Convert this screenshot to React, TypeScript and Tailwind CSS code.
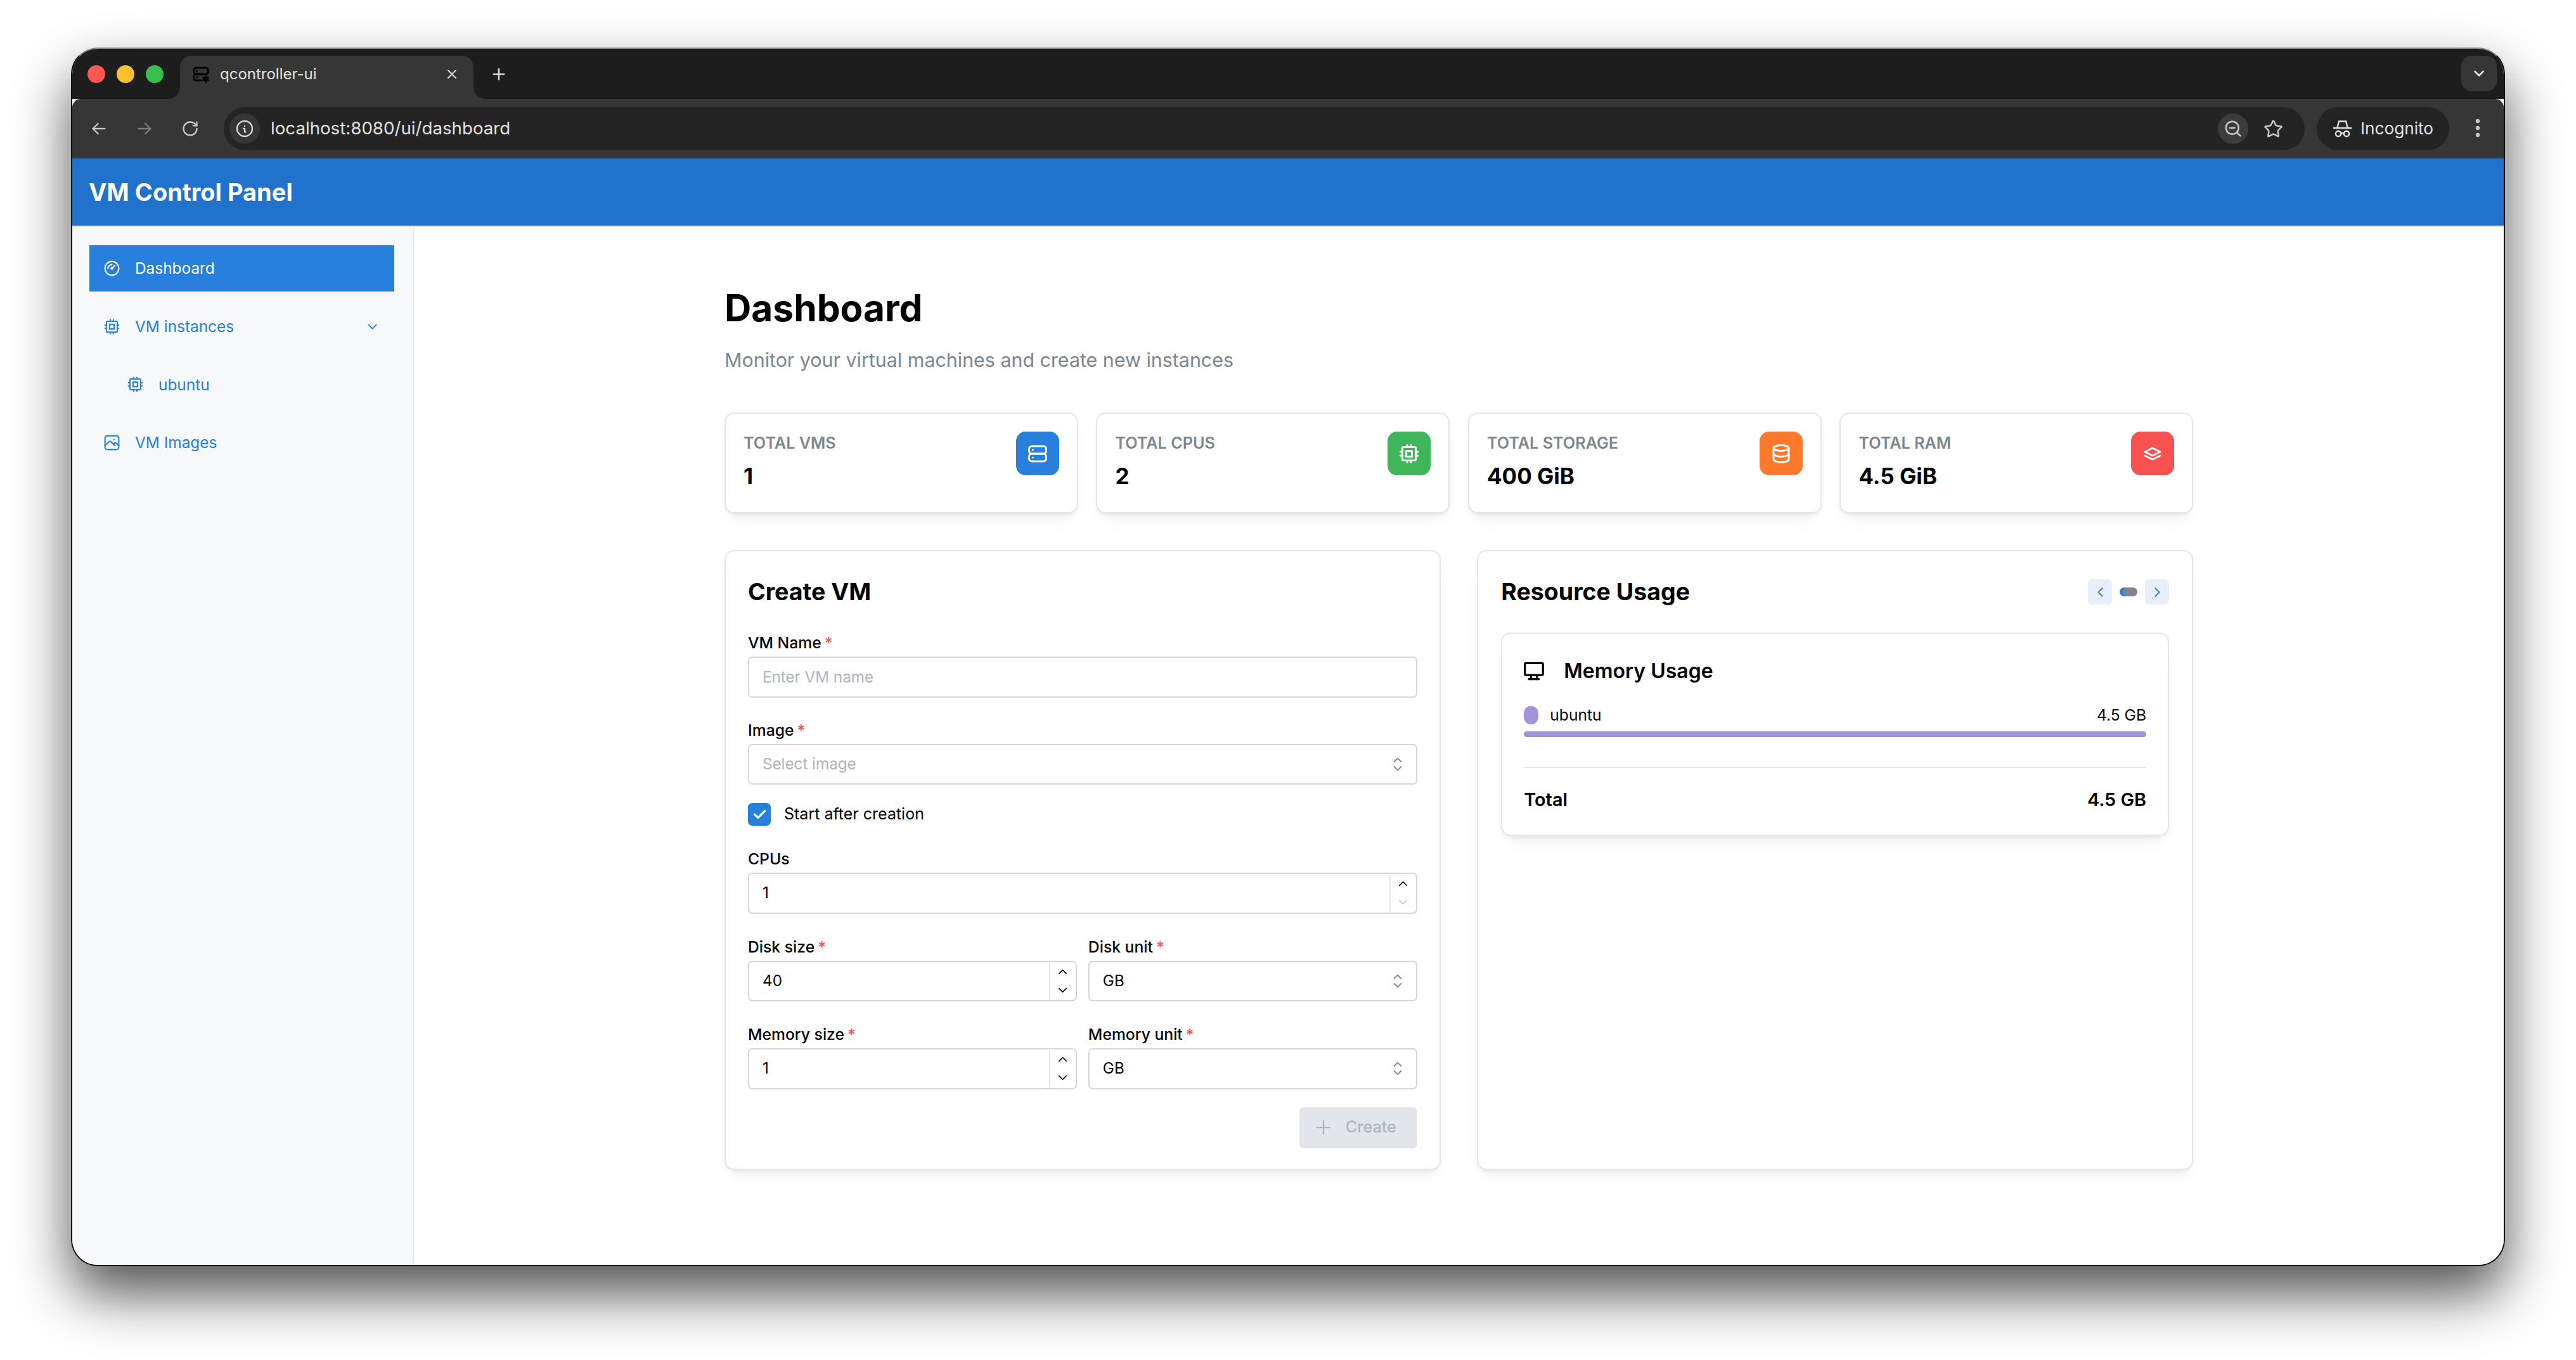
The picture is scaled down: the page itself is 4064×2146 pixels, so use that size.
import type { ReactNode } from 'react'
import { Star, ZoomOut, RotateCw } from 'lucide-react'
import {
  TbArrowLeft,
  TbArrowRight,
  TbCheck,
  TbChevronDown,
  TbChevronLeft,
  TbChevronRight,
  TbChevronUp,
  TbCpu,
  TbDatabase,
  TbDeviceDesktop,
  TbGauge,
  TbInfoCircle,
  TbPhoto,
  TbPlus,
  TbSelector,
  TbServer,
  TbServerCog,
  TbStack,
  TbX,
} from 'react-icons/tb'

const stats = [
  { label: 'Total VMs', value: '1', icon: TbServer, color: 'bg-[#2780dd]' },
  { label: 'Total CPUs', value: '2', icon: TbCpu, color: 'bg-[#40b65a]' },
  { label: 'Total Storage', value: '400 GiB', icon: TbDatabase, color: 'bg-[#fd7a2c]' },
  { label: 'Total RAM', value: '4.5 GiB', icon: TbStack, color: 'bg-[#f95050]' },
]

const cardClass =
  'rounded-[15px] border-2 border-[#e4e6e9] bg-white shadow-[0_2px_5px_rgba(0,0,0,0.05),0_18px_27px_-9px_rgba(0,0,0,0.05),0_13px_13px_-9px_rgba(0,0,0,0.04)]'

function ChromeBar() {
  return (
    <>
      <div className="flex h-[79px] shrink-0 bg-[#1d1d1d] pt-[11px]">
        <div className="flex h-[58px] items-center gap-[18px] pl-[24px] pr-[28px]">
          <span className="h-[28px] w-[28px] rounded-full bg-[#fd5754]" />
          <span className="h-[28px] w-[28px] rounded-full bg-[#fbc02f]" />
          <span className="h-[28px] w-[28px] rounded-full bg-[#36c14e]" />
        </div>
        <div className="relative ml-[-2px] flex h-[68px] w-[463px] items-center rounded-t-[18px] bg-[#363636] pb-[10px] pl-[18px] pr-[22px] text-[#e3e3e3]">
          <span className="absolute bottom-0 left-[-18px] h-[18px] w-[18px] bg-[radial-gradient(circle_at_0_0,transparent_17.5px,#363636_18px)]" />
          <span className="absolute bottom-0 right-[-18px] h-[18px] w-[18px] bg-[radial-gradient(circle_at_100%_0,transparent_17.5px,#363636_18px)]" />
          <TbServerCog size={30} strokeWidth={2.4} className="text-black" />
          <span className="ml-[15px] flex-1 text-[24px]">qcontroller-ui</span>
          <TbX size={24} strokeWidth={2} />
        </div>
        <div className="ml-[26px] flex h-[58px] items-center text-[#d6d6d6]">
          <TbPlus size={28} strokeWidth={2.2} />
        </div>
        <div className="ml-auto mr-[11px] flex h-[56px] w-[56px] items-center justify-center rounded-[16px] bg-[#363636] text-[#e3e3e3]">
          <TbChevronDown size={26} strokeWidth={2.4} />
        </div>
      </div>
      <div className="flex h-[94px] shrink-0 items-center rounded-t-[14px] bg-[#363636] pl-[26px] pr-[36px]">
        <TbArrowLeft size={32} strokeWidth={1.8} className="text-[#c7c7c7]" />
        <TbArrowRight size={32} strokeWidth={1.8} className="ml-[40px] text-[#7d7d7d]" />
        <RotateCw size={28} strokeWidth={2} className="ml-[42px] text-[#c7c7c7]" />
        <div className="ml-[39px] flex h-[68px] flex-1 items-center rounded-full bg-[#242424] pl-[9px] pr-[34px]">
          <span className="flex h-[48px] w-[48px] items-center justify-center rounded-full bg-[#363636] text-[#d9d9d9]">
            <TbInfoCircle size={32} strokeWidth={1.8} />
          </span>
          <span className="ml-[17px] flex-1 text-[27.7px] text-[#e3e3e3]">localhost:8080/ui/dashboard</span>
          <span className="flex h-[48px] w-[48px] items-center justify-center rounded-full bg-[#3c3c3c] text-[#c7c7c7]">
            <ZoomOut size={30} strokeWidth={2} />
          </span>
          <Star size={31} strokeWidth={2} className="ml-[24px] text-[#c7c7c7]" />
        </div>
        <div className="ml-[19px] flex h-[68px] w-[209px] items-center rounded-full bg-[#242424] pl-[26px] text-[#e3e3e3]">
          <svg width="29" height="27" viewBox="0 0 29 27" fill="none" stroke="currentColor" strokeWidth="2.4">
            <path d="M6.5 11 L9 1.5 H20 L22.5 11" />
            <path d="M0 12 H29" />
            <circle cx="8" cy="21" r="4.2" />
            <circle cx="21" cy="21" r="4.2" />
            <path d="M12 20 H17" />
          </svg>
          <span className="ml-[14px] text-[26.2px]">Incognito</span>
        </div>
        <svg width="10" height="34" viewBox="0 0 10 34" className="ml-[40px] text-[#c7c7c7]" fill="currentColor">
          <circle cx="5" cy="5" r="3.2" />
          <circle cx="5" cy="16" r="3.2" />
          <circle cx="5" cy="27" r="3.2" />
        </svg>
      </div>
    </>
  )
}

function NavItem({
  icon: Icon,
  label,
  active,
  nested,
  children,
}: {
  icon: typeof TbCpu
  label: string
  active?: boolean
  nested?: boolean
  children?: ReactNode
}) {
  return (
    <div
      className={`flex h-[73px] items-center pr-[22px] text-[24.4px] ${nested ? 'pl-[58px]' : 'pl-[21px]'} ${
        active ? 'bg-[#2780dd] text-white' : 'text-[#2780dd]'
      }`}
    >
      <Icon size={29} strokeWidth={1.7} />
      <span className="ml-[22px] flex-1">{label}</span>
      {children}
    </div>
  )
}

function Sidebar() {
  return (
    <aside className="flex w-[539px] shrink-0 flex-col gap-[18.7px] border-r-2 border-[#e4e7ea] bg-[#f7f8fa] pl-[27px] pr-[29px] pt-[29px]">
      <NavItem icon={TbGauge} label="Dashboard" active />
      <NavItem icon={TbCpu} label="VM instances">
        <TbChevronDown size={25} strokeWidth={1.7} />
      </NavItem>
      <NavItem icon={TbCpu} label="ubuntu" nested />
      <NavItem icon={TbPhoto} label="VM Images" />
    </aside>
  )
}

function StatCard({ label, value, icon: Icon, color }: (typeof stats)[number]) {
  return (
    <div className={`${cardClass} flex h-[159px] items-start justify-between p-[28px]`}>
      <div>
        <div className="text-[25.2px] font-semibold uppercase leading-[36px] text-[#7c8791]">{label}</div>
        <div className="mt-[7px] text-[35px] font-bold leading-[54px] text-black">{value}</div>
      </div>
      <div className={`flex h-[69px] w-[68px] items-center justify-center rounded-[15px] text-white ${color}`}>
        <Icon size={36} strokeWidth={2} />
      </div>
    </div>
  )
}

function FieldLabel({ text, required }: { text: string; required?: boolean }) {
  return (
    <label className="block h-[39px] text-[24.7px] font-medium leading-[35px] text-black">
      {text}
      {required && <span className="ml-[5px] text-[#f95050]">*</span>}
    </label>
  )
}

function TextField({ label, placeholder }: { label: string; placeholder: string }) {
  return (
    <div>
      <FieldLabel text={label} required />
      <input
        readOnly
        placeholder={placeholder}
        className="h-[64.5px] w-full rounded-[7px] border-2 border-[#d3d6da] bg-white px-[21px] text-[24.2px] outline-none placeholder:text-[#adb5bd]"
      />
    </div>
  )
}

function SelectField({ label, value, placeholder }: { label: string; value?: string; placeholder?: string }) {
  return (
    <div className="min-w-0 flex-1">
      <FieldLabel text={label} required />
      <div className="flex h-[64.5px] items-center rounded-[7px] border-2 border-[#d3d6da] bg-white pl-[21px] pr-[13px] text-[24.2px]">
        <span className={`flex-1 ${value ? 'text-black' : 'text-[#adb5bd]'}`}>{value ?? placeholder}</span>
        <TbSelector size={32} strokeWidth={1.4} className="text-[#7c8791]" />
      </div>
    </div>
  )
}

function NumberField({
  label,
  value,
  required,
  downDisabled,
}: {
  label: string
  value: string
  required?: boolean
  downDisabled?: boolean
}) {
  return (
    <div className="min-w-0 flex-1">
      <FieldLabel text={label} required={required} />
      <div className="flex h-[64.5px] items-stretch rounded-[7px] border-2 border-[#d3d6da] bg-white">
        <input
          readOnly
          defaultValue={value}
          className="min-w-0 flex-1 bg-transparent pl-[21px] text-[24.2px] text-black outline-none"
        />
        <div className="my-[1px] flex w-[42px] flex-col items-center justify-center border-l-2 border-[#e4e6e9]">
          <span className="flex flex-1 items-center text-black">
            <TbChevronUp size={23} strokeWidth={1.6} />
          </span>
          <span className={`flex flex-1 items-center ${downDisabled ? 'text-[#c3c8cd]' : 'text-black'}`}>
            <TbChevronDown size={23} strokeWidth={1.6} />
          </span>
        </div>
      </div>
    </div>
  )
}

function CreateVm() {
  return (
    <section className={`${cardClass} flex h-[978px] flex-col px-[35px] pt-[35px]`}>
      <h2 className="text-[37.5px] font-bold leading-[58px] text-black">Create VM</h2>
      <div className="mt-[34px] flex flex-col">
        <TextField label="VM Name" placeholder="Enter VM name" />
        <div className="mt-[34px] flex gap-[18px]">
          <SelectField label="Image" placeholder="Select image" />
        </div>
        <div className="mt-[29px] flex h-[36px] items-center">
          <span className="flex h-[36px] w-[36px] items-center justify-center rounded-[7px] bg-[#2780dd] text-white">
            <TbCheck size={26} strokeWidth={3} />
          </span>
          <span className="ml-[21px] text-[25px] text-black">Start after creation</span>
        </div>
        <div className="mt-[35px]">
          <NumberField label="CPUs" value="1" downDisabled />
        </div>
        <div className="mt-[35px] flex gap-[18px]">
          <NumberField label="Disk size" value="40" required />
          <SelectField label="Disk unit" value="GB" />
        </div>
        <div className="mt-[35px] flex gap-[18px]">
          <NumberField label="Memory size" value="1" required />
          <SelectField label="Memory unit" value="GB" />
        </div>
        <div className="mt-[28px] flex justify-end">
          <button className="flex h-[65px] w-[186px] items-center gap-[17px] rounded-[7px] bg-[#e2e6ea] pl-[20px] text-[25.2px] font-medium text-[#adb5bd]">
            <TbPlus size={36} strokeWidth={1.5} />
            Create
          </button>
        </div>
      </div>
    </section>
  )
}

function ResourceUsage() {
  return (
    <section className={`${cardClass} h-[978px] px-[36px] pt-[35px]`}>
      <div className="flex h-[58px] items-center justify-between">
        <h2 className="text-[37.5px] font-bold text-black">Resource Usage</h2>
        <div className="flex items-center">
          <span className="flex h-[40px] w-[38px] items-center justify-center rounded-[7px] bg-[#e7f0fa] text-[#2780dd]">
            <TbChevronLeft size={25} strokeWidth={1.8} />
          </span>
          <span className="relative mx-[12px] h-[14px] w-[28px]">
            <span className="absolute left-0 top-0 h-[14px] w-[16px] rounded-full bg-[#2780dd]" />
            <span className="absolute right-0 top-0 h-[14px] w-[23px] rounded-full bg-[#7f858c]" />
          </span>
          <span className="flex h-[40px] w-[38px] items-center justify-center rounded-[7px] bg-[#e7f0fa] text-[#2780dd]">
            <TbChevronRight size={25} strokeWidth={1.8} />
          </span>
        </div>
      </div>
      <div className={`${cardClass} mt-[35px] px-[34px] pb-[35px] pt-[34px]`}>
        <div className="flex h-[50px] items-center">
          <TbDeviceDesktop size={38} strokeWidth={2} className="ml-[-3px] text-black" />
          <span className="ml-[28px] text-[32px] font-semibold text-black">Memory Usage</span>
        </div>
        <div className="mt-[30px] flex h-[29px] items-center justify-between text-[24.6px] text-black">
          <div className="flex items-center">
            <span className="h-[29px] w-[23px] rounded-full bg-[#a194d8]" />
            <span className="ml-[18px]">ubuntu</span>
          </div>
          <span>4.5 GB</span>
        </div>
        <div className="mt-[11px] h-[9px] rounded-full bg-[#a194d8]" />
        <div className="mt-[47px] border-t-2 border-[#e4e6e9]" />
        <div className="mt-[30px] flex h-[40px] items-center justify-between text-[28.8px] font-semibold text-black">
          <span>Total</span>
          <span>4.5 GB</span>
        </div>
      </div>
    </section>
  )
}

export default function App() {
  return (
    <div className="h-[2146px] w-[4064px] overflow-hidden bg-white pl-[112px] pt-[75px] [font-family:Inter,sans-serif]">
      <div className="flex h-[1923px] w-[3840px] flex-col overflow-hidden rounded-[42px] border-2 border-black border-t-[#8a8a8a] shadow-[0_44px_88px_rgba(0,0,0,0.68)]">
        <ChromeBar />
        <header className="flex h-[108px] shrink-0 items-center border-b-2 border-[#dfe6ee] bg-[#2172cc] pl-[26px]">
          <span className="text-[38px] font-bold text-white">VM Control Panel</span>
        </header>
        <div className="flex min-h-0 flex-1">
          <Sidebar />
          <main className="min-w-0 flex-1 bg-white pt-[90px]">
            <div className="mx-auto w-[2317px]">
              <h1 className="text-[58.6px] font-bold leading-[75px] text-black">Dashboard</h1>
              <p className="mt-[23px] text-[30.4px] leading-[44px] text-[#7c8791]">
                Monitor your virtual machines and create new instances
              </p>
              <div className="mt-[61px] grid grid-cols-4 gap-[28.8px]">
                {stats.map((stat) => (
                  <StatCard key={stat.label} {...stat} />
                ))}
              </div>
              <div className="mt-[58px] grid grid-cols-2 gap-[57.6px]">
                <CreateVm />
                <ResourceUsage />
              </div>
            </div>
          </main>
        </div>
      </div>
    </div>
  )
}
